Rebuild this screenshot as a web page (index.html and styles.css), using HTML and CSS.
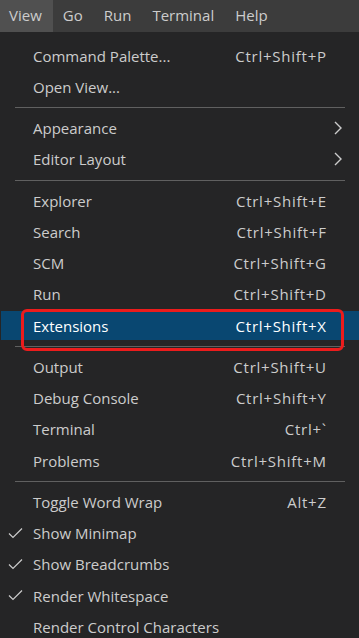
FILE: index.html
```html
<!DOCTYPE html>
<html>
<head>
  <title>View Menu</title>
  <meta charset="utf-8">
  <meta name="viewport" content="width=device-width, initial-scale=1.0">
  <link rel="stylesheet" href="styles.css">
</head>
<body>
  <div class="menubar">
    <div class="menubar-item active">View</div>
    <div class="menubar-item">Go</div>
    <div class="menubar-item">Run</div>
    <div class="menubar-item">Terminal</div>
    <div class="menubar-item">Help</div>
  </div>

  <div class="menu">
    <div class="menu-item"><span class="check"></span><span class="label">Command Palette...</span><span class="keys">Ctrl+Shift+P</span><span class="sub"></span></div>
    <div class="menu-item"><span class="check"></span><span class="label">Open View...</span><span class="keys"></span><span class="sub"></span></div>
    <div class="separator"></div>

    <div class="menu-item"><span class="check"></span><span class="label">Appearance</span><span class="keys"></span>
      <span class="sub"><svg width="8" height="14" viewBox="0 0 8 14"><polyline points="1,1 7,7 1,13" fill="none" stroke="#cccccc" stroke-width="1.4"/></svg></span></div>
    <div class="menu-item"><span class="check"></span><span class="label">Editor Layout</span><span class="keys"></span>
      <span class="sub"><svg width="8" height="14" viewBox="0 0 8 14"><polyline points="1,1 7,7 1,13" fill="none" stroke="#cccccc" stroke-width="1.4"/></svg></span></div>
    <div class="separator"></div>

    <div class="menu-item"><span class="check"></span><span class="label">Explorer</span><span class="keys">Ctrl+Shift+E</span><span class="sub"></span></div>
    <div class="menu-item"><span class="check"></span><span class="label">Search</span><span class="keys">Ctrl+Shift+F</span><span class="sub"></span></div>
    <div class="menu-item"><span class="check"></span><span class="label">SCM</span><span class="keys">Ctrl+Shift+G</span><span class="sub"></span></div>
    <div class="menu-item"><span class="check"></span><span class="label">Run</span><span class="keys">Ctrl+Shift+D</span><span class="sub"></span></div>
    <div class="menu-item selected"><span class="check"></span><span class="label">Extensions</span><span class="keys">Ctrl+Shift+X</span><span class="sub"></span>
      <div class="callout"></div>
    </div>
    <div class="separator"></div>

    <div class="menu-item"><span class="check"></span><span class="label">Output</span><span class="keys">Ctrl+Shift+U</span><span class="sub"></span></div>
    <div class="menu-item"><span class="check"></span><span class="label">Debug Console</span><span class="keys">Ctrl+Shift+Y</span><span class="sub"></span></div>
    <div class="menu-item"><span class="check"></span><span class="label">Terminal</span><span class="keys">Ctrl+`</span><span class="sub"></span></div>
    <div class="menu-item"><span class="check"></span><span class="label">Problems</span><span class="keys">Ctrl+Shift+M</span><span class="sub"></span></div>
    <div class="separator"></div>

    <div class="menu-item"><span class="check"></span><span class="label">Toggle Word Wrap</span><span class="keys">Alt+Z</span><span class="sub"></span></div>
    <div class="menu-item"><span class="check"><svg width="15" height="11" viewBox="0 0 15 11"><polyline points="1,5.5 5,9.5 14,0.5" fill="none" stroke="#cccccc" stroke-width="1.2"/></svg></span><span class="label">Show Minimap</span><span class="keys"></span><span class="sub"></span></div>
    <div class="menu-item"><span class="check"><svg width="15" height="11" viewBox="0 0 15 11"><polyline points="1,5.5 5,9.5 14,0.5" fill="none" stroke="#cccccc" stroke-width="1.2"/></svg></span><span class="label">Show Breadcrumbs</span><span class="keys"></span><span class="sub"></span></div>
    <div class="menu-item"><span class="check"><svg width="15" height="11" viewBox="0 0 15 11"><polyline points="1,5.5 5,9.5 14,0.5" fill="none" stroke="#cccccc" stroke-width="1.2"/></svg></span><span class="label">Render Whitespace</span><span class="keys"></span><span class="sub"></span></div>
    <div class="menu-item"><span class="check"></span><span class="label">Render Control Characters</span><span class="keys"></span><span class="sub"></span></div>
  </div>
</body>
</html>
```

FILE: styles.css
```css
* {
  margin: 0;
  padding: 0;
  box-sizing: border-box;
}

body {
  font-family: "Open Sans", "Noto Sans", sans-serif;
  font-size: 15px;
  background: #252526;
  color: #cccccc;
  overflow: hidden;
}

.menubar {
  height: 32px;
  background: #3c3c3c;
  display: flex;
}

.menubar-item {
  padding: 0 11px 3px 10px;
  display: flex;
  align-items: center;
}

.menubar-item:first-child {
  padding-left: 9px;
}

.menubar-item.active {
  background: #505050;
}

.menu {
  display: flex;
  flex-direction: column;
  padding: 8px 0 0 1px;
}

.menu-item {
  position: relative;
  height: 29.25px;
  margin: 1px 0;
  display: flex;
  align-items: center;
}

.menu-item.selected {
  background: #094771;
  color: #ffffff;
}

.check {
  width: 32px;
  display: flex;
  justify-content: center;
  padding-right: 3px;
}

.label {
  flex: 1;
  white-space: nowrap;
}

.keys {
  white-space: nowrap;
  letter-spacing: 0.75px;
  margin-right: -0.75px;
}

.sub {
  width: 33px;
  display: flex;
  justify-content: center;
  padding-right: 9px;
}

.separator {
  height: 10px;
  margin: 0 14px;
  display: flex;
  align-items: center;
}

.separator::before {
  content: "";
  flex: 1;
  height: 1px;
  background: #606060;
}

/* red annotation frame around the highlighted entry */
.callout {
  position: absolute;
  left: 20px;
  top: -2px;
  width: 323px;
  height: 42px;
  border: 3px solid #ec1c1c;
  border-radius: 6px;
}
```
